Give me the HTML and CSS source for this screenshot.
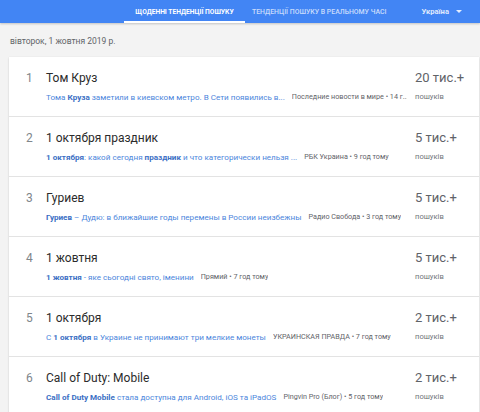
FILE: index.html
```html
<!DOCTYPE html>
<html lang="uk">
<head>
<meta charset="utf-8">
<link rel="stylesheet" href="styles.css">
</head>
<body>
<header class="topbar">
  <div class="tab active">ЩОДЕННІ ТЕНДЕНЦІЇ ПОШУКУ</div>
  <div class="tab">ТЕНДЕНЦІЇ ПОШУКУ В РЕАЛЬНОМУ ЧАСІ</div>
  <div class="country">Україна <span class="caret"></span></div>
</header>
<div class="date">вівторок, 1 жовтня 2019 р.</div>
<div class="card">
  <div class="row">
    <div class="num">1</div>
    <div class="main">
      <div class="title">Том Круз</div>
      <div class="sub"><span class="link">Тома <b>Круза</b> заметили в киевском метро. В Сети появились в...</span><span class="src">Последние новости в мире • 14 г...</span></div>
    </div>
    <div class="stat"><div class="count">20 тис.+</div><div class="label">пошуків</div></div>
  </div>
  <div class="row">
    <div class="num">2</div>
    <div class="main">
      <div class="title">1 октября праздник</div>
      <div class="sub"><span class="link"><b>1 октября</b>: какой сегодня <b>праздник</b> и что категорически нельзя ...</span><span class="src">РБК Украина • 9 год тому</span></div>
    </div>
    <div class="stat"><div class="count">5 тис.+</div><div class="label">пошуків</div></div>
  </div>
  <div class="row">
    <div class="num">3</div>
    <div class="main">
      <div class="title">Гуриев</div>
      <div class="sub"><span class="link"><b>Гуриев</b> – Дудю: в ближайшие годы перемены в России неизбежны</span><span class="src">Радио Свобода • 3 год тому</span></div>
    </div>
    <div class="stat"><div class="count">5 тис.+</div><div class="label">пошуків</div></div>
  </div>
  <div class="row">
    <div class="num">4</div>
    <div class="main">
      <div class="title">1 жовтня</div>
      <div class="sub"><span class="link"><b>1 жовтня</b> - яке сьогодні свято, іменини</span><span class="src">Прямий • 7 год тому</span></div>
    </div>
    <div class="stat"><div class="count">5 тис.+</div><div class="label">пошуків</div></div>
  </div>
  <div class="row">
    <div class="num">5</div>
    <div class="main">
      <div class="title">1 октября</div>
      <div class="sub"><span class="link">С <b>1 октября</b> в Украине не принимают три мелкие монеты</span><span class="src">УКРАИНСКАЯ ПРАВДА • 7 год тому</span></div>
    </div>
    <div class="stat"><div class="count">2 тис.+</div><div class="label">пошуків</div></div>
  </div>
  <div class="row">
    <div class="num">6</div>
    <div class="main">
      <div class="title">Call of Duty: Mobile</div>
      <div class="sub"><span class="link"><b>Call of Duty Mobile</b> стала доступна для Android, iOS та iPadOS</span><span class="src">Pingvin Pro (Блог) • 5 год тому</span></div>
    </div>
    <div class="stat"><div class="count">2 тис.+</div><div class="label">пошуків</div></div>
  </div>
</div>
</body>
</html>
```

FILE: styles.css
```css
html, body {
  margin: 0;
  padding: 0;
}
body {
  width: 480px;
  height: 412px;
  overflow: hidden;
  background: #f3f3f3;
  font-family: Roboto, "Noto Sans", Arial, sans-serif;
  color: #202124;
}
.topbar {
  height: 23px;
  background: #4285f4;
  display: flex;
  align-items: stretch;
  padding-left: 124px;
  box-shadow: 0 1px 2px rgba(0,0,0,0.2);
  position: relative;
  z-index: 1;
}
.tab {
  display: flex;
  align-items: center;
  font-size: 6.9px;
  font-weight: 500;
  color: rgba(255,255,255,0.72);
  padding: 0 7px;
  box-sizing: border-box;
  white-space: nowrap;
}
.tab.active {
  color: #fff;
  font-weight: 700;
  width: 121px;
  justify-content: center;
  padding: 0;
  border-bottom: 2px solid #fff;
  padding-top: 2px;
  font-size: 6.7px;
}
.country {
  display: flex;
  align-items: center;
  margin-left: 28px;
  font-size: 7.6px;
  font-weight: 700;
  color: rgba(255,255,255,0.85);
  white-space: nowrap;
}
.caret {
  display: inline-block;
  width: 0;
  height: 0;
  margin-left: 7px;
  border-left: 3px solid transparent;
  border-right: 3px solid transparent;
  border-top: 3px solid rgba(255,255,255,0.85);
}
.date {
  font-size: 8.5px;
  color: #5f6368;
  padding: 13px 0 0 10px;
  height: 21px;
  line-height: 10px;
}
.card {
  margin: 0 1px 0 9px;
  background: #fff;
  box-shadow: 0 1px 2px rgba(0,0,0,0.12), 0 0 1px rgba(0,0,0,0.08);
}
.row {
  display: grid;
  grid-template-columns: 37px 1fr 64px;
  height: 59px;
  border-bottom: 1px solid #e3e3e3;
}
.num {
  padding: 14px 0 0 17px;
  font-size: 12px;
  line-height: 14px;
  color: #80868b;
}
.main {
  padding-top: 14px;
  min-width: 0;
  padding-right: 8px;
}
.title {
  font-size: 12px;
  line-height: 14px;
  color: #2b2b2b;
}
.sub {
  margin-top: 7px;
  display: flex;
  gap: 7px;
  font-size: 8.1px;
  line-height: 10px;
  white-space: nowrap;
}
.link {
  color: #4c86dc;
  flex-shrink: 0;
}
.link b {
  color: #3b6fc4;
  font-weight: 700;
}
.src {
  color: #5f6368;
  font-size: 7.2px;
  flex-shrink: 1;
  min-width: 0;
  overflow: hidden;
}
.stat {
  padding-top: 13px;
}
.count {
  font-size: 13px;
  line-height: 16px;
  color: #5f6368;
  white-space: nowrap;
}
.label {
  margin-top: 6px;
  font-size: 7.6px;
  line-height: 10px;
  color: #70757a;
}
```
